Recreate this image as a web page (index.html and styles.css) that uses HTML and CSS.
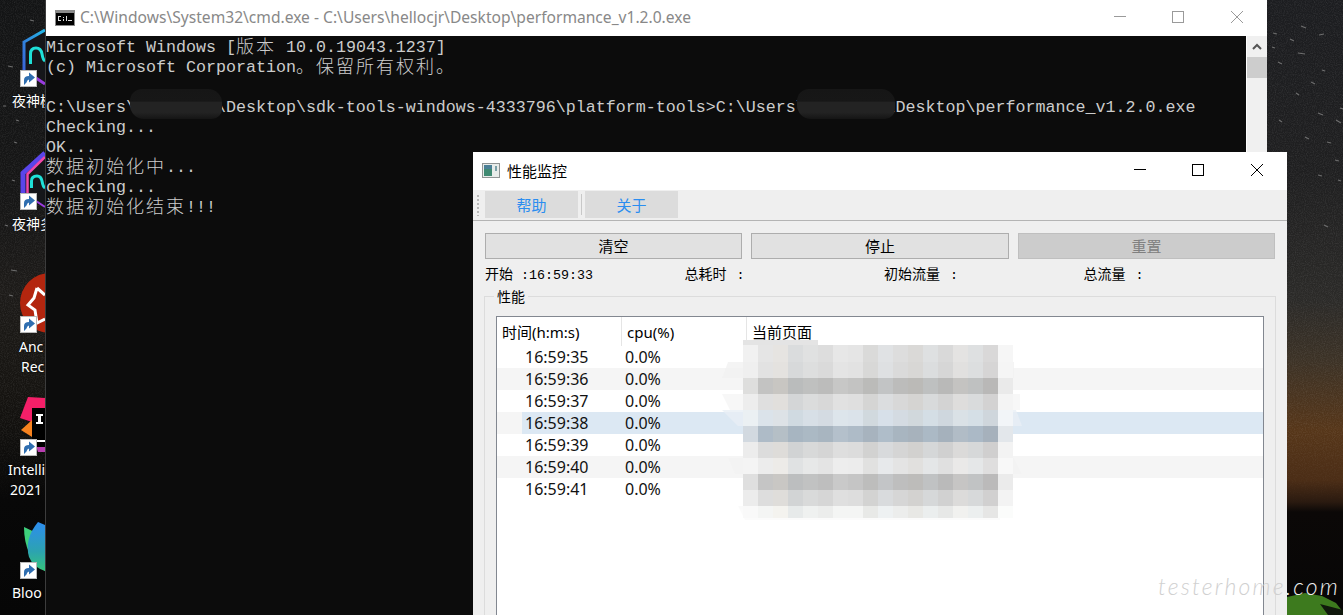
FILE: index.html
```html
<!DOCTYPE html>
<html lang="zh-CN">
<head>
<meta charset="utf-8">
<title>性能监控</title>
<link rel="stylesheet" href="styles.css">
</head>
<body>
<div class="desktop">
  <svg class="wall-noise" width="1343" height="615" viewBox="0 0 1343 615">
    <defs>
      <filter id="grain" x="0" y="0" width="100%" height="100%">
        <feTurbulence type="fractalNoise" baseFrequency="0.9" numOctaves="2" seed="4"/>
        <feColorMatrix values="0 0 0 0 1  0 0 0 0 1  0 0 0 0 1  0 0 0 1.1 -0.42"/>
      </filter>
      <linearGradient id="grainFade" x1="0" y1="0" x2="0" y2="1">
        <stop offset="0" stop-color="#fff"/>
        <stop offset="0.7" stop-color="#fff"/>
        <stop offset="0.83" stop-color="#000"/>
      </linearGradient>
      <mask id="grainMask"><rect width="1343" height="615" fill="url(#grainFade)"/></mask>
    </defs>
    <g mask="url(#grainMask)"><rect width="1343" height="615" filter="url(#grain)" opacity="0.16"/></g>
    <g class="streaks">
      <path d="M1301 26l5 2M1273 33l4 1M1290 39l4 2M1319 35l5-1M1298 53l7 1M1272 47l3 1M1278 62l4 2M1311 82l4 2M1322 70l3 1M1296 93l3 2M1318 113l5 2M1336 120l5 3M1305 137l4 2M1279 120l3 2M1327 142l4 1M1335 160l4 1M1318 175l4 1M1324 225l4 2M1340 108l3 1M1338 180l3 1"/>
      <path d="M8 66l5 1M14 142l3 1M3 106l3 0M9 295l4 1M11 270l6 1M12 180l3 1M5 225l3 1M30 20l4 1M16 120l3 1"/>
    </g>
    <path class="leaf" d="M1287 597 L1305 593 L1322 596 L1336 603 L1343 612 L1343 615 L1287 615Z"/>
    <path class="leaf-dark" d="M1320 604 L1343 610 L1343 615 L1328 615Z"/>
  </svg>

  <div class="shortcut shortcut-a">
    <svg class="shortcut-icon" width="45" height="64" viewBox="0 0 45 64">
      <defs>
        <linearGradient id="noxA" x1="0" y1="1" x2="1" y2="0"><stop offset="0" stop-color="#3b62d8"/><stop offset="1" stop-color="#22b8e6"/></linearGradient>
      </defs>
      <path d="M45 3 L24 15 V46 L45 58 Z" fill="#15161a"/>
      <path d="M45 3 L24 15 V46" fill="none" stroke="url(#noxA)" stroke-width="3"/>
      <path d="M36 51 L45 57" fill="none" stroke="#9a3ce0" stroke-width="3"/>
      <path d="M30.5 37 V27 Q30.5 21 36 21 Q41 21 42 27 Q43 33 45 34" fill="none" stroke="#1fe0d8" stroke-width="3"/>
      <g class="badge"><rect x="20.5" y="43.5" width="16" height="16" fill="#fff" stroke="#b9b9b9"/><path d="M24 58 V53 Q24 49 29 49 V45.500 L35 50.500 L29 55.500 V52.500 Q27 53 26.500 55.500 Z" fill="#2f6eb0"/></g>
    </svg>
    <div class="shortcut-label label-nox">夜神模</div>
  </div>

  <div class="shortcut shortcut-b">
    <svg class="shortcut-icon" width="45" height="64" viewBox="0 0 45 64">
      <path d="M45 3 L22 23 V46 L45 58 Z" fill="#15161a"/>
      <path d="M45 3 L23 23 V46" fill="none" stroke="#5a45ea" stroke-width="5"/>
      <path d="M45 7 L27.500 24 V44" fill="none" stroke="#f048a8" stroke-width="2.500"/>
      <path d="M36 51 L45 57" fill="none" stroke="#9a3ce0" stroke-width="2"/>
      <path d="M31.500 38 V31 Q31.500 26 37 26 Q41 26 42 31 Q43 37 45 38" fill="none" stroke="#1fe0d8" stroke-width="3"/>
      <g class="badge"><rect x="20.5" y="43.5" width="16" height="16" fill="#fff" stroke="#b9b9b9"/><path d="M24 58 V53 Q24 49 29 49 V45.500 L35 50.500 L29 55.500 V52.500 Q27 53 26.500 55.500 Z" fill="#2f6eb0"/></g>
    </svg>
    <div class="shortcut-label label-nox">夜神多</div>
  </div>

  <div class="shortcut shortcut-c">
    <svg class="shortcut-icon" width="45" height="64" viewBox="0 0 45 64">
      <circle cx="50" cy="30" r="30" fill="#b3260f"/>
      <path d="M37 15 L45 22 M37 15 L34 25 L28 32 L35 37 L37 50 L45 46" fill="none" stroke="#fff" stroke-width="3"/>
      <g class="badge"><rect x="20.5" y="43.5" width="16" height="16" fill="#fff" stroke="#b9b9b9"/><path d="M24 58 V53 Q24 49 29 49 V45.500 L35 50.500 L29 55.500 V52.500 Q27 53 26.500 55.500 Z" fill="#2f6eb0"/></g>
    </svg>
    <div class="shortcut-label label-an">Anc</div>
    <div class="shortcut-label label-re">Rec</div>
  </div>

  <div class="shortcut shortcut-d">
    <svg class="shortcut-icon" width="45" height="64" viewBox="0 0 45 64">
      <path d="M28 1 L46 2 V14 L32 26 L20 22 Z" fill="#f41f68"/>
      <path d="M21 34 L32 24 V41 Z" fill="#f7821e"/>
      <path d="M36 50 H46 V56 H38 Z" fill="#b83eb0"/>
      <rect x="32" y="12" width="13" height="39" fill="#000"/>
      <path d="M36 18 H43 V20 H41 V26 H43 V28 H36 V26 H38 V20 H36 Z" fill="#fff"/>
      <rect x="36" y="44" width="9" height="2" fill="#fff"/>
      <g class="badge"><rect x="20.5" y="43.5" width="16" height="16" fill="#fff" stroke="#b9b9b9"/><path d="M24 58 V53 Q24 49 29 49 V45.500 L35 50.500 L29 55.500 V52.500 Q27 53 26.500 55.500 Z" fill="#2f6eb0"/></g>
    </svg>
    <div class="shortcut-label label-in">Intelli</div>
    <div class="shortcut-label label-yr">2021</div>
  </div>

  <div class="shortcut shortcut-e">
    <svg class="shortcut-icon" width="45" height="64" viewBox="0 0 45 64">
      <defs>
        <linearGradient id="bloomA" x1="0.500" y1="0" x2="0.500" y2="1"><stop offset="0" stop-color="#2d8df0"/><stop offset="0.600" stop-color="#2ca3b0"/><stop offset="1" stop-color="#36c47a"/></linearGradient>
      </defs>
      <path d="M24 8 Q24 38 45 52 L45 18 Z" fill="#3ed07c"/>
      <path d="M38 3 Q24 20 29 38 Q33 48 45 52 V6 Z" fill="url(#bloomA)"/>
      <g class="badge"><rect x="20.5" y="43.5" width="16" height="16" fill="#fff" stroke="#b9b9b9"/><path d="M24 58 V53 Q24 49 29 49 V45.500 L35 50.500 L29 55.500 V52.500 Q27 53 26.500 55.500 Z" fill="#2f6eb0"/></g>
    </svg>
    <div class="shortcut-label label-bl">Bloo</div>
  </div>

  <section class="cmd-window">
    <header class="cmd-title">
      <svg class="cmd-icon" width="20" height="16" viewBox="0 0 20 16">
        <rect width="20" height="16" fill="#8a8a8a"/>
        <rect x="1" y="3" width="18" height="12" fill="#000"/>
        <path d="M3 6h3v1H4v3h2v1H3zM8 7h1v1H8zM8 9h1v2H8zM11 6h1v5h-1zM13 10h4v1h-4z" fill="#ddd"/>
      </svg>
      <span class="cmd-title-text">C:\Windows\System32\cmd.exe - C:\Users\hellocjr\Desktop\performance_v1.2.0.exe</span>
      <div class="win-controls win-controls-inactive">
        <span class="win-btn"><svg width="12" height="12" viewBox="0 0 12 12"><path d="M0 5.500H12"/></svg></span>
        <span class="win-btn"><svg width="12" height="12" viewBox="0 0 12 12"><rect x="0.500" y="0.500" width="11" height="11"/></svg></span>
        <span class="win-btn"><svg width="12" height="12" viewBox="0 0 12 12"><path d="M0 0L12 12M12 0L0 12"/></svg></span>
      </div>
    </header>
    <div class="cmd-body">
      <div class="console">
        <div class="line">Microsoft Windows [<span class="cjk">版本</span> 10.0.19043.1237]</div>
        <div class="line">(c) Microsoft Corporation<span class="cjk">。保留所有权利。</span></div>
        <div class="line">&nbsp;</div>
        <div class="line">C:\Users\&nbsp;&nbsp;&nbsp;&nbsp;&nbsp;&nbsp;&nbsp;&nbsp;\Desktop\sdk-tools-windows-4333796\platform-tools&gt;C:\Users\&nbsp;&nbsp;&nbsp;&nbsp;&nbsp;&nbsp;&nbsp;&nbsp;\Desktop\performance_v1.2.0.exe</div>
        <div class="line">Checking...</div>
        <div class="line">OK...</div>
        <div class="line"><span class="cjk">数据初始化中</span>...</div>
        <div class="line">checking...</div>
        <div class="line"><span class="cjk">数据初始化结束</span>!!!</div>
        <div class="smear smear-one"></div>
        <div class="smear smear-two"></div>
      </div>
      <div class="cmd-scroll">
        <svg class="scroll-up" width="10" height="7" viewBox="0 0 10 7"><path d="M1 6L5 2L9 6"/></svg>
        <div class="scroll-thumb"></div>
      </div>
    </div>
  </section>

  <section class="perf-window">
    <header class="perf-title">
      <svg class="perf-icon" width="18" height="15" viewBox="0 0 18 15">
        <rect x="0.500" y="0.500" width="17" height="14" fill="#e8ecea" stroke="#8f9494"/>
        <rect x="2" y="2" width="8" height="11" fill="#3f8a72"/>
        <rect x="2" y="2" width="8" height="4" fill="#4a7f96"/>
        <rect x="13" y="3" width="2" height="5" fill="#7aa0a8"/>
      </svg>
      <span class="perf-title-text">性能监控</span>
      <div class="win-controls">
        <span class="win-btn"><svg width="12" height="12" viewBox="0 0 12 12"><path d="M0 5.500H12"/></svg></span>
        <span class="win-btn"><svg width="12" height="12" viewBox="0 0 12 12"><rect x="0.500" y="0.500" width="11" height="11"/></svg></span>
        <span class="win-btn"><svg width="12" height="12" viewBox="0 0 12 12"><path d="M0 0L12 12M12 0L0 12"/></svg></span>
      </div>
    </header>
    <nav class="toolbar">
      <span class="grip"></span>
      <span class="tool-btn">帮助</span>
      <span class="tool-sep"></span>
      <span class="tool-btn">关于</span>
    </nav>
    <div class="perf-body">
      <div class="actions">
        <button class="action">清空</button>
        <button class="action">停止</button>
        <button class="action" disabled>重置</button>
      </div>
      <div class="stats">
        <span>开始<span class="mono">&nbsp;:16:59:33</span></span>
        <span>总耗时<span class="mono stat-colon">:</span></span>
        <span>初始流量<span class="mono stat-colon">:</span></span>
        <span>总流量<span class="mono stat-colon">:</span></span>
      </div>
      <fieldset class="group">
        <legend>性能</legend>
        <div class="table">
          <div class="thead">
            <span class="th th-time">时间(h:m:s)</span>
            <span class="th th-cpu">cpu(%)</span>
            <span class="th th-page">当前页面</span>
          </div>
          <div class="row"><span class="indent"></span><span class="cells"><span class="c-time">16:59:35</span><span class="c-cpu">0.0%</span></span></div>
          <div class="row alt"><span class="indent"></span><span class="cells"><span class="c-time">16:59:36</span><span class="c-cpu">0.0%</span></span></div>
          <div class="row"><span class="indent"></span><span class="cells"><span class="c-time">16:59:37</span><span class="c-cpu">0.0%</span></span></div>
          <div class="row alt selected"><span class="indent"></span><span class="cells"><span class="c-time">16:59:38</span><span class="c-cpu">0.0%</span></span></div>
          <div class="row"><span class="indent"></span><span class="cells"><span class="c-time">16:59:39</span><span class="c-cpu">0.0%</span></span></div>
          <div class="row alt"><span class="indent"></span><span class="cells"><span class="c-time">16:59:40</span><span class="c-cpu">0.0%</span></span></div>
          <div class="row"><span class="indent"></span><span class="cells"><span class="c-time">16:59:41</span><span class="c-cpu">0.0%</span></span></div>
          <svg class="mosaic" width="310" height="190" viewBox="720 335 310 190">
            <g opacity="0.8">
              <path d="M728 362 H1014 V378 H722 Z" fill="#f2f2f2"/>
              <path d="M722 394 H1020 V410 H730 Z" fill="#f6f6f6"/>
              <path d="M722 410 H1016 L1022 426 H738 Z" fill="#e9eff6"/>
              <path d="M728 458 H1014 L1022 474 H735 Z" fill="#f3f3f3"/>
              <path d="M738 506 H1000 V520 H745 Z" fill="#fafafa"/>
            </g>
            <rect x="743" y="340" width="75" height="6" fill="#e4e4e4"/>
            <g>
              <rect x="743" y="345" width="270" height="17" fill="#e5e5e5"/>
              <rect x="743" y="362" width="270" height="16" fill="#e2e2e2"/>
              <rect x="743" y="378" width="270" height="16" fill="#c3c3c2"/>
              <rect x="743" y="394" width="270" height="16" fill="#dfdfdf"/>
              <rect x="743" y="410" width="270" height="16" fill="#dbe3ea"/>
              <rect x="743" y="426" width="270" height="16" fill="#aebbc7"/>
              <rect x="743" y="442" width="270" height="16" fill="#dcdcdc"/>
              <rect x="743" y="458" width="270" height="16" fill="#ececec"/>
              <rect x="743" y="474" width="270" height="16" fill="#c5c5c5"/>
              <rect x="743" y="490" width="270" height="16" fill="#dddddd"/>
              <rect x="743" y="506" width="270" height="12" fill="#f4f5f4"/>
            </g>
            <g>
              <rect x="743" y="345" width="15" height="173" fill="#fff" opacity="0.45"/>
              <rect x="773" y="345" width="15" height="173" fill="#f4e6c8" opacity="0.10"/>
              <rect x="788" y="345" width="15" height="173" fill="#5b6d80" opacity="0.08"/>
              <rect x="803" y="345" width="15" height="173" fill="#6d7d8a" opacity="0.03"/>
              <rect x="818" y="345" width="15" height="173" fill="#000" opacity="0.03"/>
              <rect x="833" y="345" width="15" height="173" fill="#fff" opacity="0.08"/>
              <rect x="863" y="345" width="15" height="173" fill="#5c5040" opacity="0.07"/>
              <rect x="878" y="345" width="15" height="173" fill="#b8cce0" opacity="0.10"/>
              <rect x="893" y="345" width="15" height="173" fill="#000" opacity="0.03"/>
              <rect x="908" y="345" width="15" height="173" fill="#5a4030" opacity="0.07"/>
              <rect x="923" y="345" width="15" height="173" fill="#8aa0b4" opacity="0.08"/>
              <rect x="938" y="345" width="15" height="173" fill="#000" opacity="0.05"/>
              <rect x="953" y="345" width="15" height="173" fill="#d8c8c0" opacity="0.08"/>
              <rect x="968" y="345" width="15" height="173" fill="#90a4b4" opacity="0.07"/>
              <rect x="983" y="345" width="15" height="173" fill="#4c463c" opacity="0.08"/>
              <rect x="998" y="345" width="15" height="173" fill="#fff" opacity="0.65"/>
            </g>
          </svg>
        </div>
      </fieldset>
    </div>
  </section>

  <div class="watermark"><span class="wm-grey">testerhome</span><span class="wm-white">.com</span></div>
</div>
</body>
</html>
```
FILE: styles.css
```css
* { box-sizing: border-box; }
html, body { margin: 0; padding: 0; background: #000; }

.desktop {
  position: relative;
  width: 1343px;
  height: 615px;
  overflow: hidden;
  font-family: "Noto Sans", "Noto Sans CJK SC", sans-serif;
  background:
    linear-gradient(to bottom, #131415 0, #161616 200px, #1d1b19 290px, #1a1815 340px, #151310 400px, #080808 500px, #060606 615px) left top / 46px 100% no-repeat,
    linear-gradient(to bottom, #1c1d20 0, #1f1f20 170px, #2b2a28 300px, #3c3226 360px, #563619 430px, #4b2d16 480px, #2a1a10 502px, #0b0807 512px, #070606 615px) right top / 80px 100% no-repeat,
    #111;
}

.wall-noise { position: absolute; left: 0; top: 0; }
.streaks path { stroke: #6e6e6e; stroke-width: 1.2; fill: none; }
.leaf { fill: #3d7a1e; }
.leaf-dark { fill: #10180c; }

/* desktop shortcuts */
.shortcut { position: absolute; left: 0; width: 45px; }
.shortcut-a { top: 27px; }
.shortcut-b { top: 150px; }
.shortcut-c { top: 273px; }
.shortcut-d { top: 396px; }
.shortcut-e { top: 519px; }
.shortcut-icon { display: block; }
.shortcut-label {
  width: 70px;
  height: 20px;
  line-height: 20px;
  font-size: 14px;
  color: #fff;
  white-space: nowrap;
  text-shadow: 0 0 2px #000;
}
.label-nox { padding-left: 12px; }
.label-an { padding-left: 19px; }
.label-re { padding-left: 21px; }
.label-in { padding-left: 8px; }
.label-yr { padding-left: 10px; }
.label-bl { padding-left: 12px; }

/* console window */
.cmd-window {
  position: absolute;
  left: 45px;
  top: 0;
  width: 1222px;
  height: 615px;
  display: flex;
  flex-direction: column;
  background: #fff;
  border-left: 1px solid #3c3c3c;
}
.cmd-title {
  height: 36px;
  flex: none;
  display: flex;
  align-items: center;
  padding: 0 0 2px 9px;
}
.cmd-icon { flex: none; margin: 2px 5px 0 0; }
.cmd-title-text {
  flex: 1;
  font-size: 15.6px;
  color: #888;
  white-space: nowrap;
}
.win-controls { display: flex; flex: none; align-self: stretch; margin-right: 1px; }
.win-btn {
  width: 58.5px;
  display: flex;
  align-items: center;
  justify-content: center;
}
.win-btn svg { fill: none; stroke: #000; stroke-width: 1; display: block; }
.win-controls-inactive .win-btn svg { stroke: #9a9a9a; }

.cmd-body { flex: 1; display: flex; min-height: 0; }
.console {
  position: relative;
  width: 1200px;
  flex: none;
  background: #0c0c0c;
  color: #cccccc;
  font-family: "Liberation Mono", "Noto Sans CJK SC", monospace;
  font-size: 16.67px;
  line-height: 20px;
  padding-top: 2px;
  white-space: nowrap;
}
.line { height: 20px; }
.cjk {
  font-family: "Noto Sans CJK SC", sans-serif;
  font-size: 18px;
  font-weight: 300;
  letter-spacing: 2px;
  line-height: 0;
  vertical-align: -1px;
}
.smear {
  position: absolute;
  top: 53px;
  height: 30px;
  border-radius: 12px 14px 10px 14px;
  background: linear-gradient(to bottom, #161616 0, #171717 40%, #232323 45%, #232323 78%, #151515 100%);
}
.smear-one { left: 84px; width: 92px; }
.smear-two { left: 751px; width: 98px; }

.cmd-scroll {
  width: 20px;
  margin-left: 1px;
  flex: none;
  background: #f0f0f0;
  position: relative;
}
.scroll-up {
  display: block;
  margin: 7px auto 0;
  fill: none;
  stroke: #555;
  stroke-width: 2;
}
.scroll-thumb { margin-top: 7px; height: 21px; background: #cdcdcd; }

/* performance window */
.perf-window {
  position: absolute;
  left: 473px;
  top: 152px;
  width: 814px;
  height: 463px;
  background: #efefef;
  display: flex;
  flex-direction: column;
  font-family: "Noto Sans CJK SC", sans-serif;
  font-size: 14px;
  color: #000;
}
.perf-title {
  height: 38px;
  flex: none;
  background: #fff;
  display: flex;
  align-items: center;
  padding: 0 0 2px 9px;
}
.perf-icon { flex: none; margin-right: 7px; }
.perf-title-text { flex: 1; font-size: 15px; color: #000; }

.toolbar {
  height: 31px;
  flex: none;
  display: flex;
  align-items: stretch;
  padding: 1px 0 2px 4px;
  border-bottom: 1px solid #b4b4b4;
}
.grip {
  width: 2px;
  margin: 4px 6px 2px 0;
  background: repeating-linear-gradient(to bottom, #b8b8b8 0 2px, transparent 2px 4px);
}
.tool-btn {
  width: 93px;
  background: #dcdcdc;
  color: #2a8df0;
  display: flex;
  align-items: center;
  justify-content: center;
  font-size: 15px;
  padding-bottom: 1px;
}
.tool-sep { width: 1px; margin: 3px; background: #c8c8c8; }

.perf-body {
  flex: 1;
  min-height: 0;
  display: flex;
  flex-direction: column;
  padding: 12px 12px 0 11px;
}
.actions { display: grid; grid-template-columns: 257px 258px 257px; column-gap: 9px; margin-left: 1px; }
.action {
  height: 26px;
  padding: 0 0 2px;
  font-family: inherit;
  font-size: 15px;
  color: #000;
  background: #e1e1e1;
  border: 1px solid #adadad;
  border-radius: 0;
}
.action:disabled { background: #cccccc; border-color: #bfbfbf; color: #808080; }

.stats {
  display: grid;
  grid-template-columns: repeat(4, 199.5px);
  height: 20px;
  margin: 4px 0 0 1px;
  line-height: 20px;
  font-size: 14px;
  white-space: nowrap;
}
.mono { font-family: "Liberation Mono", monospace; font-size: 13.33px; }
.stat-colon { margin-left: 10px; }

.group {
  flex: 1;
  min-height: 0;
  margin: 3px 0 0 0;
  width: 792px;
  padding: 10px 11px 0 11px;
  border: 1px solid #dcdcdc;
  border-bottom: 0;
  min-inline-size: 0;
}
.group legend { padding: 0 3px; margin-left: -2px; font-size: 14px; line-height: 20px; height: 20px; }

.table {
  position: relative;
  width: 768px;
  height: 320px;
  background: #fff;
  border: 1px solid #828790;
  border-bottom: 0;
  font-family: "Noto Sans", "Noto Sans CJK SC", sans-serif;
}
.thead { display: flex; height: 29px; }
.th {
  display: flex;
  align-items: center;
  padding-left: 5px;
  font-size: 15px;
  white-space: nowrap;
  border-right: 1px solid #e5e5e5;
}
.th-time { width: 125px; }
.th-cpu { width: 125px; }
.th-page { flex: 1; border-right: 0; font-family: "Noto Sans CJK SC", sans-serif; }

.row { display: flex; height: 22px; }
.row.alt { background: #f5f5f5; }
.indent { width: 25px; flex: none; }
.cells { flex: 1; display: flex; align-items: center; font-size: 16px; color: #111; }
.selected .cells { background: #dce8f3; }
.c-time { width: 103px; padding-left: 3px; }
.c-cpu { flex: none; }

.mosaic { position: absolute; left: 223px; top: 18px; }

.watermark {
  position: absolute;
  left: 1158px;
  top: 571px;
  font-family: "Lato", sans-serif;
  font-weight: 300;
  font-style: italic;
  font-size: 23px;
  letter-spacing: 2.2px;
  line-height: 30px;
  white-space: nowrap;
}
.wm-grey { color: #d0d0d0; }
.wm-white { color: #eee; }
```
